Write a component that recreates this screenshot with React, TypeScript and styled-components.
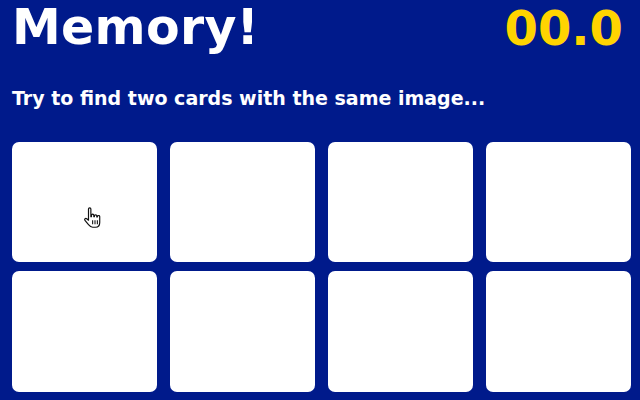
import styled, { createGlobalStyle } from "styled-components";

const GlobalStyle = createGlobalStyle`
  html, body {
    margin:0;
    padding:0;
    background-color:#001a8b;
  }
  body {
    font-family:"DejaVu Sans", "Liberation Sans", sans-serif;
  }
`

const Page = styled.div`
  width:640px;
  height:400px;
  overflow:hidden;
  background-color:#001a8b;
  padding:0 10px 0 12px;
  box-sizing:border-box;
`

const Header = styled.header`
  display:flex;
  justify-content:space-between;
  align-items:flex-start;
  padding-right:7px;
`

const Title = styled.h1`
  margin:0;
  font-size:49px;
  line-height:56px;
  font-weight:bold;
  color:#ffffff;
  letter-spacing:0.3px;
`

const Timer = styled.div`
  font-size:48px;
  line-height:56px;
  font-weight:bold;
  color:#ffd400;
`

const Intro = styled.p`
  margin:31px 0 0 0;
  font-size:19px;
  line-height:22px;
  font-weight:bold;
  color:#ffffff;
`

const Board = styled.div`
  display:grid;
  grid-template-columns:repeat(4, 145px);
  grid-template-rows:120px 121px;
  column-gap:13px;
  row-gap:9px;
  margin-top:33px;
`

const Card = styled.div`
  position:relative;
  background-color:#ffffff;
  border-radius:7px;
  cursor:pointer;
`

const Pointer = styled.svg`
  position:absolute;
  left:71px;
  top:64px;
`

const HandCursor = () => (
  <Pointer width="24" height="26" viewBox="0 0 20 22">
    <path
      d="M4.5 2.5 C4.5 1.2 6.5 1.2 6.5 2.5 L6.5 9 L7 9 L7 7.8 C7 6.6 9 6.6 9 7.8 L9 9 L9.5 9 L9.5 8.3 C9.5 7.2 11.5 7.2 11.5 8.3 L11.5 9.3 L12 9.3 L12 8.8 C12 7.8 14 7.8 14 8.8 L14 14 C14 16.5 12.5 18 10.5 18 L8 18 C6.5 18 5.5 17 4.5 15.8 L1.5 12.2 C0.7 11.2 2 10 3 10.8 L4.5 12 Z"
      fill="#ffffff"
      stroke="#111111"
      strokeWidth="1"
      strokeLinejoin="round"
    />
    <path d="M8 12 L8 15.5 M10 12 L10 15.5 M12 12 L12 15.5" stroke="#111111" strokeWidth="0.9" />
  </Pointer>
)

const cards = [0, 1, 2, 3, 4, 5, 6, 7]

const App = () => {
  return (
    <Page>
      <GlobalStyle />
      <Header>
        <Title>Memory!</Title>
        <Timer>00.0</Timer>
      </Header>
      <Intro>Try to find two cards with the same image...</Intro>
      <Board>
        {cards.map((id) => (
          <Card key={id}>{id === 0 && <HandCursor />}</Card>
        ))}
      </Board>
    </Page>
  )
}

export default App;
